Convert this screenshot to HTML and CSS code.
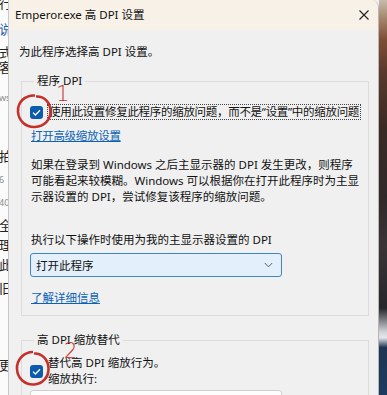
FILE: index.html
```html
<!DOCTYPE html>
<html lang="zh-CN">
<head>
<meta charset="utf-8">
<title>Emperor.exe 高 DPI 设置</title>
<link rel="stylesheet" href="styles.css">
</head>
<body>
<div class="screen">
  <div class="bg-left">
    <span class="c r1">行</span>
    <span class="c r2 blue">说</span>
    <span class="c r3">式</span>
    <span class="c r4">客</span>
    <span class="c r5 grey small">ws</span>
    <span class="c r6">拍</span>
    <span class="c r7 grey small">6</span>
    <span class="c r8 grey small">40</span>
    <span class="c r9">全</span>
    <span class="c r10">理</span>
    <span class="c r11">此</span>
    <span class="c r12">旧</span>
    <span class="c r13">更</span>
  </div>

  <div class="dialog">
    <div class="titlebar">
      <span class="title">Emperor.exe 高 DPI 设置</span>
      <svg class="close" width="10" height="10" viewBox="0 0 10 10"><path d="M0.5 0.5 L9.5 9.5 M9.5 0.5 L0.5 9.5" stroke="#1f1f1f" stroke-width="1.1" fill="none"/></svg>
    </div>

    <div class="content">
      <p class="intro">为此程序选择高 DPI 设置。</p>

      <fieldset class="group g1">
        <legend>程序 DPI</legend>
        <label class="check">
          <span class="box"><svg width="9" height="7" viewBox="0 0 9 7"><path d="M1 3.6 L3.4 6 L8 1.2" stroke="#fff" stroke-width="1.3" fill="none"/></svg></span>
          <span class="focus">使用此设置修复此程序的缩放问题，而不是“设置”中的缩放问题</span>
        </label>
        <a class="link l1" href="#">打开高级缩放设置</a>
        <p class="para">如果在登录到 Windows 之后主显示器的 DPI 发生更改，则程序<br>可能看起来较模糊。Windows 可以根据你在打开此程序时为主显<br>示器设置的 DPI，尝试修复该程序的缩放问题。</p>
        <p class="lbl">执行以下操作时使用为我的主显示器设置的 DPI</p>
        <div class="select active">
          <span>打开此程序</span>
          <svg width="9" height="6" viewBox="0 0 9 6"><path d="M0.8 1 L4.5 4.8 L8.2 1" stroke="#5f5f5f" stroke-width="1" fill="none"/></svg>
        </div>
        <a class="link l2" href="#">了解详细信息</a>
      </fieldset>

      <fieldset class="group g2">
        <legend>高 DPI 缩放替代</legend>
        <label class="check two">
          <span class="box"><svg width="9" height="7" viewBox="0 0 9 7"><path d="M1 3.6 L3.4 6 L8 1.2" stroke="#fff" stroke-width="1.3" fill="none"/></svg></span>
          <span class="txt">替代高 DPI 缩放行为。<br>缩放执行:</span>
        </label>
        <div class="select plain"></div>
      </fieldset>
    </div>

    <svg class="annot" width="371" height="395" viewBox="0 0 371 395">
      <path d="M26 95.5 C16 95 8.5 102 9 111.5 C9.5 121 17 127.5 26 127 C35 126.5 42 120 41.5 110.5 C41 102 35 96 27 96.5" stroke="#c4302b" stroke-width="2.6" fill="none"/>
      <path d="M24 352 C14.5 352 7.5 360 8 369 C8.5 378.5 16 385 25 384.5 C33.5 384 40 377 39.5 368 C39 359.5 33 353 25 353.5" stroke="#c4302b" stroke-width="2.6" fill="none"/>
      <text x="47" y="101" class="num">1</text>
      <text x="55" y="358" class="num">2</text>
    </svg>
  </div>

  <div class="bg-right"></div>
</div>
</body>
</html>
```

FILE: styles.css
```css
* { box-sizing: border-box; }

html, body {
  margin: 0;
  padding: 0;
  width: 387px;
  height: 395px;
  overflow: hidden;
  background: #f0f0f0;
}

.screen {
  display: flex;
  width: 387px;
  height: 395px;
  font-family: "Noto Sans", "Noto Sans CJK SC", sans-serif;
  font-size: 11.5px;
  color: #111;
}

/* background window on the left */
.bg-left {
  width: 8px;
  flex: none;
  background: #fbfbfb;
  overflow: hidden;
  display: flex;
  flex-direction: column;
  font-size: 13px;
  line-height: 13px;
  color: #222;
}
.bg-left .c { display: block; white-space: nowrap; margin-left: -1px; }
.bg-left .blue { color: #1f5fb0; }
.bg-left .grey { color: #8a8a8a; }
.bg-left .small { font-size: 9px; }
.bg-left .r1 { margin-top: -3px; }
.bg-left .r2 { margin-top: 13px; }
.bg-left .r3 { margin-top: 10px; }
.bg-left .r4 { margin-top: 2px; }
.bg-left .r5 { margin-top: 17px; }
.bg-left .r6 { margin-top: 46px; }
.bg-left .r7 { margin-top: 10px; }
.bg-left .r8 { margin-top: 10px; }
.bg-left .r9 { margin-top: 10px; }
.bg-left .r10 { margin-top: 7px; }
.bg-left .r11 { margin-top: 7px; }
.bg-left .r12 { margin-top: 10px; }
.bg-left .r13 { margin-top: 64px; }

/* photo on the right */
.bg-right {
  width: 8px;
  flex: none;
  background: linear-gradient(to bottom,
    #c8bcad 0%, #a98d74 4%, #7e4e35 10%, #5a3a2c 18%, #3b2a24 32%,
    #30292a 50%, #3a3436 62%, #26272c 78%, #cfd3d8 84%, #e4e6ea 85.5%,
    #1e3552 88%, #1d3a60 100%);
}

/* dialog */
.dialog {
  position: relative;
  width: 371px;
  flex: none;
  background: #f0f0f0;
  border-left: 1px solid #c9c9c9;
  border-right: 1px solid #b9b6b2;
  border-top-right-radius: 8px;
  overflow: hidden;
}

.titlebar {
  height: 30px;
  background: #f8f1e8;
  display: flex;
  align-items: center;
  justify-content: space-between;
  padding: 0 9px 0 6px;
}
.title { font-size: 11.5px; line-height: 16px; }
.close { display: block; margin-top: -1px; }

.content {
  padding: 14px 10px 0 10px;
}

.intro {
  margin: 0;
  line-height: 16px;
}

.group {
  margin: 13px 0 0 2px;
  width: 348px;
  border: 1px solid #dcdcdc;
  padding: 15px 9px 9px 8px;
  min-width: 0;
}
.group legend {
  padding: 0 3px;
  margin-left: 4px;
  line-height: 16px;
}

.check {
  display: flex;
  align-items: center;
  gap: 4px;
}
.box {
  width: 13px;
  height: 13px;
  border-radius: 3px;
  background: #0b5cad;
  display: flex;
  align-items: center;
  justify-content: center;
  flex: none;
}
.box svg { display: block; }
.focus {
  border: 1px dotted #444;
  line-height: 14px;
  padding: 0 1px;
  white-space: nowrap;
  letter-spacing: -0.3px;
}

.link {
  display: block;
  width: max-content;
  color: #0b63b6;
  text-decoration: underline;
  line-height: 16px;
  margin-left: 1px;
}
.l1 { margin-top: 8px; letter-spacing: -0.3px; }
.l2 { margin-top: 13px; }

.para {
  margin: 13px 0 0 1px;
  line-height: 16px;
  white-space: nowrap;
}
.lbl {
  margin: 27px 0 0 1px;
  line-height: 16px;
}

.select {
  margin-top: 5px;
  width: 252px;
  height: 24px;
  border-radius: 3px;
  display: flex;
  align-items: center;
  justify-content: space-between;
  padding: 0 8px 0 5px;
}
.select.active {
  background: #e3effa;
  border: 1px solid #3f86c5;
}
.select.plain {
  margin-top: 3px;
  background: #fdfdfd;
  border: 1px solid #cfcfcf;
}

.g2 {
  margin-top: 16px;
  padding-top: 7px;
}
.check.two .txt { line-height: 16px; margin-left: 1px; }

/* red annotations over the dialog */
.annot {
  position: absolute;
  left: 0;
  top: 0;
  pointer-events: none;
}
.annot .num {
  font-family: "DejaVu Sans", sans-serif;
  font-size: 21px;
  font-weight: 300;
  fill: #c4302b;
}
```
